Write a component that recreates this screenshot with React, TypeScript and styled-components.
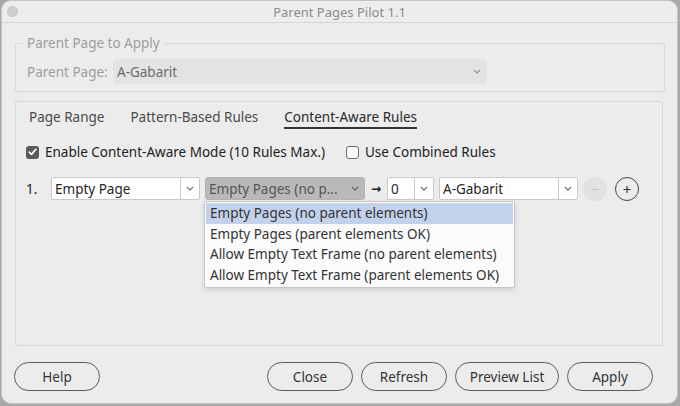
import React from "react";
import styled, { createGlobalStyle, css } from "styled-components";

const GlobalStyle = createGlobalStyle`
  html, body {
    margin: 0;
    padding: 0;
    background: #a9a9a9;
  }
  body {
    width: 680px;
    height: 406px;
    overflow: hidden;
    font-family: "Noto Sans", "Liberation Sans", sans-serif;
    font-size: 13.5px;
    color: #2b2b2b;
  }
`;

const Window = styled.div`
  box-sizing: border-box;
  width: 677px;
  height: 404px;
  margin-left: 1px;
  background: #ececec;
  border: 1px solid #c4c4c4;
  border-radius: 10px;
  overflow: hidden;
  display: flex;
  flex-direction: column;
`;

const TitleBar = styled.div`
  position: relative;
  height: 21px;
  flex: none;
  border-bottom: 1px solid #d4d4d4;
  background: #ededed;
  display: flex;
  align-items: center;
  justify-content: center;
  color: #8c8c8c;
  font-size: 13px;
`;

// inactive close light in the corner of the title bar
const CloseLight = styled.span`
  position: absolute;
  left: 5px;
  top: 5px;
  width: 11px;
  height: 11px;
  border-radius: 50%;
  background: #cfcfcf;
  border: 1px solid #c3c3c3;
  box-sizing: border-box;
`;

const Body = styled.div`
  flex: 1;
  display: flex;
  flex-direction: column;
  padding: 12px 12px 0 13px;
`;

const Group = styled.fieldset`
  margin: 0;
  padding: 8px 11px 7px;
  border: 1px solid #d8d8d8;
  border-radius: 2px;
  min-width: 0;
`;

const Legend = styled.legend`
  padding: 0 4px;
  margin-left: -4px;
  line-height: 16px;
  color: #9d9d9d;
`;

const FieldRow = styled.div`
  display: flex;
  align-items: center;
`;

const FieldLabel = styled.span`
  width: 86px;
  color: #9d9d9d;
`;

const Chevron = ({ color = "#6a6a6a" }: { color?: string }) => (
  <svg width="8" height="5" viewBox="0 0 8 5" fill="none">
    <polyline points="0.8,0.8 4,4 7.2,0.8" stroke={color} strokeWidth="1.1" />
  </svg>
);

const DisabledSelect = styled.div`
  box-sizing: border-box;
  width: 374px;
  height: 25px;
  border-radius: 4px;
  background: #e3e3e3;
  display: flex;
  align-items: center;
  justify-content: space-between;
  padding: 0 6px 0 4px;
  color: #6b6b6b;
`;

const Panel = styled.div`
  margin-top: 9px;
  margin-right: 2px;
  height: 245px;
  box-sizing: border-box;
  border: 1px solid #d8d8d8;
  border-radius: 2px;
  padding: 7px 10px 0;
  display: flex;
  flex-direction: column;
`;

const TabBar = styled.div`
  display: flex;
  gap: 26px;
  margin-left: 3px;
`;

const Tab = styled.span<{ $active?: boolean }>`
  line-height: 16px;
  padding-bottom: 2px;
  color: #4a4a4a;
  border-bottom: 2px solid transparent;
  ${(p) =>
    p.$active &&
    css`
      color: #2a2a2a;
      border-bottom-color: #333;
    `}
`;

const OptionsRow = styled.div`
  display: flex;
  align-items: center;
  margin-top: 15px;
  height: 16px;
`;

const CheckLabel = styled.label<{ $width?: number }>`
  display: flex;
  align-items: center;
  gap: 6px;
  width: ${(p) => (p.$width ? `${p.$width}px` : "auto")};
  color: #222;
`;

const Box = styled.span<{ $checked?: boolean }>`
  box-sizing: border-box;
  width: 13px;
  height: 13px;
  border-radius: 3px;
  display: inline-flex;
  align-items: center;
  justify-content: center;
  ${(p) =>
    p.$checked
      ? css`
          background: #5a5a5a;
        `
      : css`
          border: 1px solid #6d6d6d;
          background: #fafafa;
        `}
`;

const CheckBox = ({ checked }: { checked?: boolean }) => (
  <Box $checked={checked}>
    {checked && (
      <svg width="9" height="8" viewBox="0 0 9 8" fill="none">
        <polyline
          points="1.2,4.2 3.5,6.4 7.8,1.4"
          stroke="#fff"
          strokeWidth="1.7"
          strokeLinecap="round"
          strokeLinejoin="round"
        />
      </svg>
    )}
  </Box>
);

const RuleRow = styled.div`
  display: flex;
  align-items: center;
  margin-top: 17px;
  height: 23px;
`;

const RuleIndex = styled.span`
  width: 25px;
  color: #222;
`;

const SelectBox = styled.div<{ $width: number; $pressed?: boolean }>`
  position: relative;
  box-sizing: border-box;
  width: ${(p) => p.$width}px;
  height: 23px;
  display: flex;
  align-items: stretch;
  border: 1px solid #c9c9c9;
  background: #fff;
  border-radius: 2px;
  ${(p) =>
    p.$pressed &&
    css`
      background: #b9b9b9;
      border-color: #b3b3b3;
      border-radius: 3px;
    `}
`;

const SelectValue = styled.span<{ $muted?: boolean }>`
  flex: 1;
  display: flex;
  align-items: center;
  padding-left: 3px;
  white-space: nowrap;
  overflow: hidden;
  color: ${(p) => (p.$muted ? "#555" : "#262626")};
`;

const SelectArrow = styled.span<{ $divided?: boolean }>`
  width: 18px;
  display: flex;
  align-items: center;
  justify-content: center;
  border-left: ${(p) => (p.$divided ? "1px solid #c9c9c9" : "none")};
`;

const FlowArrow = styled.span`
  width: 22px;
  text-align: center;
  font-family: "DejaVu Sans", sans-serif;
  font-size: 12px;
  font-weight: bold;
  color: #222;
`;

const Gap = styled.span<{ $w: number }>`
  width: ${(p) => p.$w}px;
  flex: none;
`;

const CircleButton = styled.span<{ $disabled?: boolean }>`
  box-sizing: border-box;
  width: 24px;
  height: 24px;
  border-radius: 50%;
  display: inline-flex;
  align-items: center;
  justify-content: center;
  font-size: 15px;
  ${(p) =>
    p.$disabled
      ? css`
          background: #e2e2e2;
          color: #c2c2c2;
        `
      : css`
          border: 1px solid #454545;
          color: #333;
        `}
`;

const Menu = styled.ul`
  position: absolute;
  left: -2px;
  top: 23px;
  width: 311px;
  margin: 0;
  padding: 1px 1px 2px;
  list-style: none;
  background: #fbfbfb;
  border: 1px solid #c6c6c6;
  border-radius: 2px;
  box-shadow: 0 2px 5px rgba(0, 0, 0, 0.12);
  z-index: 2;
  box-sizing: border-box;
`;

const MenuItem = styled.li<{ $active?: boolean }>`
  height: 20.5px;
  line-height: 20px;
  padding-left: 4px;
  color: #333;
  white-space: nowrap;
  background: ${(p) => (p.$active ? "#c3d2ec" : "transparent")};
`;

const Footer = styled.div`
  display: flex;
  align-items: center;
  gap: 8px;
  padding: 16px 12px 0 0;
  margin-left: -1px;
`;

const Button = styled.button<{ $width?: number }>`
  box-sizing: border-box;
  width: ${(p) => p.$width ?? 86}px;
  height: 29px;
  border-radius: 15px;
  border: 1px solid #5a5a5a;
  background: transparent;
  font-family: inherit;
  font-size: 13.5px;
  color: #333;
  padding: 0;
`;

const Spacer = styled.span`
  flex: 1;
`;

const ruleOptions = [
  "Empty Pages (no parent elements)",
  "Empty Pages (parent elements OK)",
  "Allow Empty Text Frame (no parent elements)",
  "Allow Empty Text Frame (parent elements OK)",
];

export default function App() {
  return (
    <>
      <GlobalStyle />
      <Window>
        <TitleBar>
          <CloseLight />
          Parent Pages Pilot 1.1
        </TitleBar>
        <Body>
          <Group>
            <Legend>Parent Page to Apply</Legend>
            <FieldRow>
              <FieldLabel>Parent Page:</FieldLabel>
              <DisabledSelect>
                A-Gabarit
                <Chevron color="#8a8a8a" />
              </DisabledSelect>
            </FieldRow>
          </Group>

          <Panel>
            <TabBar>
              <Tab>Page Range</Tab>
              <Tab>Pattern-Based Rules</Tab>
              <Tab $active>Content-Aware Rules</Tab>
            </TabBar>

            <OptionsRow>
              <CheckLabel $width={320}>
                <CheckBox checked />
                Enable Content-Aware Mode (10 Rules Max.)
              </CheckLabel>
              <CheckLabel>
                <CheckBox />
                Use Combined Rules
              </CheckLabel>
            </OptionsRow>

            <RuleRow>
              <RuleIndex>1.</RuleIndex>
              <SelectBox $width={149}>
                <SelectValue>Empty Page</SelectValue>
                <SelectArrow $divided>
                  <Chevron />
                </SelectArrow>
              </SelectBox>
              <Gap $w={5} />
              <SelectBox $width={160} $pressed>
                <SelectValue $muted>Empty Pages (no p...</SelectValue>
                <SelectArrow>
                  <Chevron color="#5a5a5a" />
                </SelectArrow>
                <Menu>
                  {ruleOptions.map((o, i) => (
                    <MenuItem key={o} $active={i === 0}>
                      {o}
                    </MenuItem>
                  ))}
                </Menu>
              </SelectBox>
              <FlowArrow>→</FlowArrow>
              <SelectBox $width={47}>
                <SelectValue>0</SelectValue>
                <SelectArrow $divided>
                  <Chevron />
                </SelectArrow>
              </SelectBox>
              <Gap $w={5} />
              <SelectBox $width={139}>
                <SelectValue>A-Gabarit</SelectValue>
                <SelectArrow $divided>
                  <Chevron />
                </SelectArrow>
              </SelectBox>
              <Gap $w={5} />
              <CircleButton $disabled>−</CircleButton>
              <Gap $w={8} />
              <CircleButton>+</CircleButton>
            </RuleRow>
          </Panel>

          <Footer>
            <Button>Help</Button>
            <Spacer />
            <Button>Close</Button>
            <Button>Refresh</Button>
            <Button $width={104}>Preview List</Button>
            <Button>Apply</Button>
          </Footer>
        </Body>
      </Window>
    </>
  );
}
